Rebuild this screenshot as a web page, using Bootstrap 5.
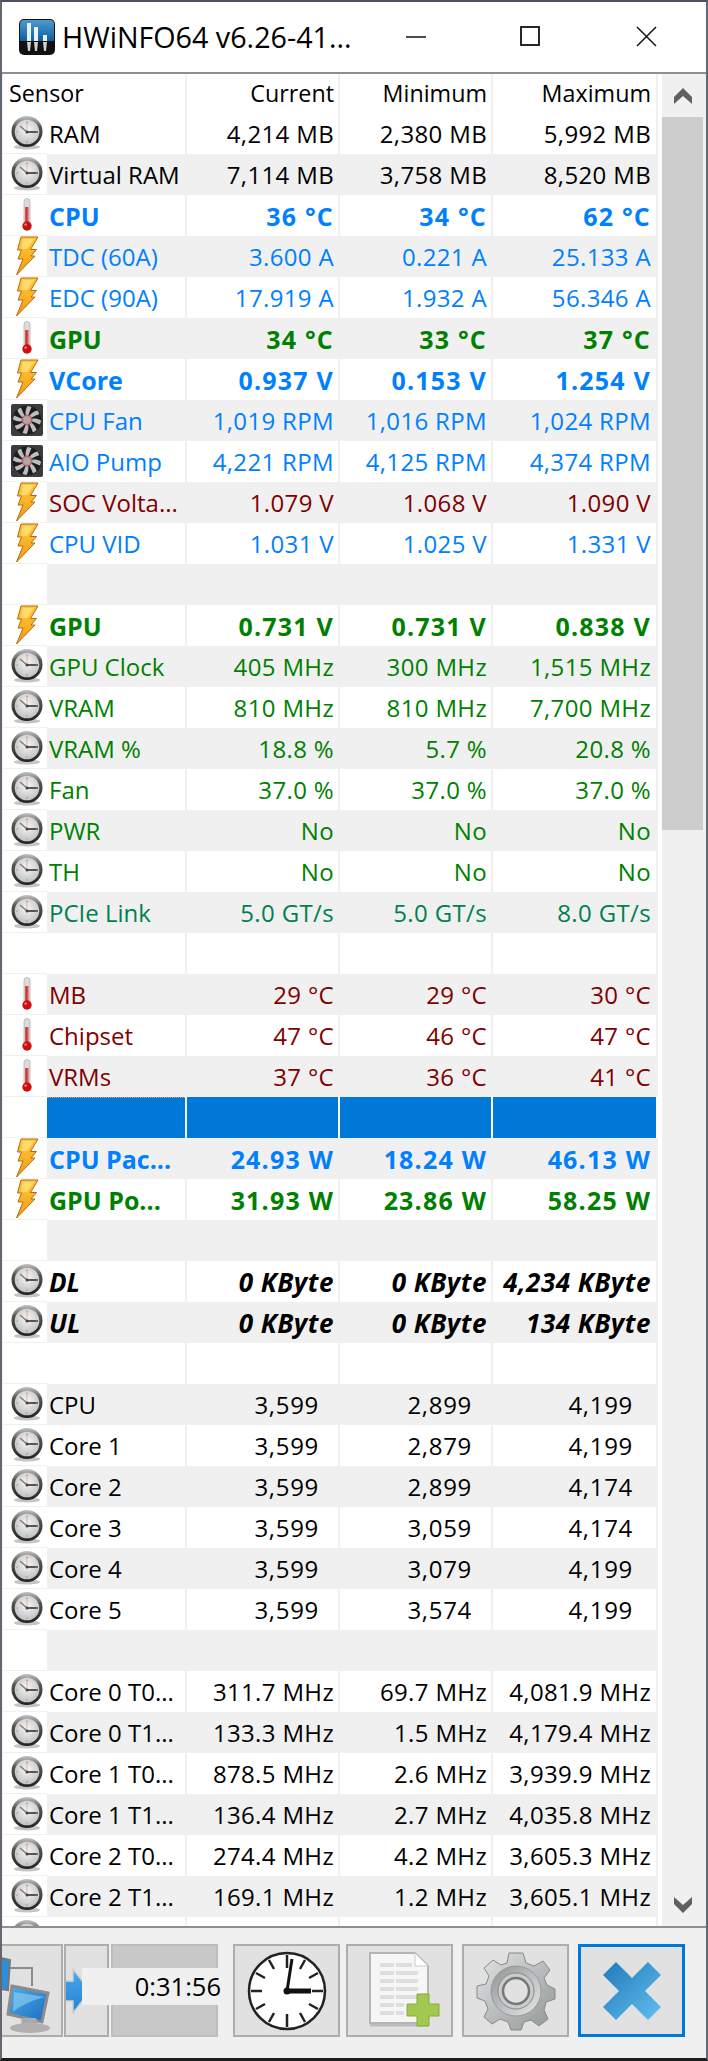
<!DOCTYPE html>
<html lang="en"><head><meta charset="utf-8"><title>HWiNFO64</title>
<link href="https://cdn.jsdelivr.net/npm/bootstrap@5.3.0/dist/css/bootstrap.min.css" rel="stylesheet">
<style>
html,body{margin:0;height:2061px;overflow:hidden;background:#f0f0f0}
body{font-family:"Open Sans","Noto Sans",sans-serif;font-size:24px;line-height:42px;color:#000}
.hw-win{width:708px;height:2061px;border-top:2px solid #4c5161;border-left:2px solid #63676f;border-right:2px solid #63676f;border-bottom:3px solid #1c1c1c;background:#f0f0f0}
.hw-title{height:72px;background:#fff;border-bottom:2px solid #8b8f98;font-size:28.700px;line-height:1;flex:none}
.hw-title .ti{width:36px;height:36px;margin-left:17px;margin-right:7px}
.hw-title .cap{white-space:nowrap}
.hw-cb{position:absolute;top:24px}
.hw-main{height:1852px;flex:none;background:#fff;margin-left:1px;overflow:hidden}
.hw-list{width:655px;flex:none;overflow:hidden}
.hw-head,.rw{display:grid;grid-template-columns:184px 153px 153px 165px;width:655px}
.hw-head{height:39px;line-height:39px;font-size:23.300px}
.hw-head>span{border-right:2px solid #f0f0f0;text-align:right;padding-right:4px;height:39px}
.hw-head>span:first-child{text-align:left;padding-left:6px;padding-right:0}
.hw-head>span:last-child{padding-right:5px}
.rw{height:41px;position:relative;white-space:nowrap}
.rw:nth-child(even) .nm,.rw:nth-child(even) .vl{background:#f0f0f0;border-right-color:#f0f0f0}
.nc{display:flex;overflow:hidden;border-right:2px solid #f0f0f0}
.ic{width:44px;flex:none;display:flex;align-items:center;justify-content:center;background:#fff;border-bottom:1px solid #f0f0f0;padding-left:4px}
.ic svg{width:34px;height:34px}
.ic svg.bolt{width:24px;height:40px}
.nm{flex:1;padding-left:2px;overflow:hidden}
.vl{text-align:right;padding-right:4px;border-right:2px solid #f0f0f0;overflow:hidden;letter-spacing:.35px}
.vl:last-child{padding-right:5px}
.rw.hz .vl{padding-right:19px;letter-spacing:.7px}
.rw.hz .vl:last-child{padding-right:23px}
.cb{color:#0080ff}.cg{color:#008000}.cr{color:#800000}.ct{color:#008050}
.st{font-weight:700;font-size:25px}.si{font-weight:700;font-style:italic;font-size:26px}
.st .vl{letter-spacing:1.200px}
.si .vl{letter-spacing:.5px}
.rw.sel .nm,.rw.sel .vl{background:#0078d7;border-right-color:#fff}
.rw.sel .nm{border-top:1px dotted #e89a4a}
.hw-sb{width:44px;flex:none;margin-left:4px;background:#f0f0f0;display:flex;flex-direction:column}
.hw-sb .ar{height:43px;width:41px;display:flex;align-items:center;justify-content:center;flex:none}
.hw-sb .th{height:713px;width:41px;background:#cdcdcd;flex:none}
.hw-foot{height:132px;border-top:2px solid #8b8f98;position:relative;background:#f0f0f0;padding-top:16px;flex:none}
.tb{height:93px;background:#e1e1e1;border:2px solid #adadad;display:flex;align-items:center;justify-content:center;flex:none;overflow:hidden}
.tb svg{display:block;flex:none}
.tb.dis{background:#c8c8c8;border-color:#bdbdbd}
.tb.act{border:3px solid #0078d7}
.hw-time{position:absolute;left:80px;top:40px;width:136px;height:37px;background:#f0f0f0;text-align:right;line-height:37px;font-size:25.500px;white-space:nowrap}
.hw-time span{display:inline-block;margin-right:-3px}
</style></head>
<body>
<svg width="0" height="0" class="position-absolute">
<defs>
<radialGradient id="gFace" cx=".5" cy=".4" r=".65"><stop offset="0" stop-color="#f6f6f6"/><stop offset="1" stop-color="#bdbdbd"/></radialGradient>
<linearGradient id="gRim" x1="0" y1="0" x2="0" y2="1"><stop offset="0" stop-color="#c4c4c4"/><stop offset=".35" stop-color="#555"/><stop offset="1" stop-color="#222"/></linearGradient>
<linearGradient id="gBolt" x1="0" y1="0" x2="0" y2="1"><stop offset="0" stop-color="#ffc93a"/><stop offset="1" stop-color="#f49a10"/></linearGradient>
<linearGradient id="gTh" x1="0" y1="0" x2="1" y2="0"><stop offset="0" stop-color="#c81818"/><stop offset="1" stop-color="#e87070"/></linearGradient>
<symbol id="k" viewBox="0 0 34 34"><ellipse cx="17" cy="31" rx="13" ry="2.500" fill="#c4c4c4"/><circle cx="17" cy="15.500" r="15.500" fill="url(#gRim)"/><circle cx="17" cy="16" r="12.300" fill="url(#gFace)"/><path d="M17 16 10 10" stroke="#777" stroke-width="1.300"/><path d="M17 16H28" stroke="#333" stroke-width="1.600"/><path d="M17 16V6" stroke="#e8a070" stroke-width=".8"/><path d="M17 5.500v1.500M17 25v1.500M6.500 16h1.500M26 16h1.500" stroke="#999" stroke-width="1"/><circle cx="17" cy="16" r="1.500" fill="#444"/></symbol>
<symbol id="t" viewBox="0 0 34 34"><rect x="14" y="0.500" width="6" height="27" rx="3" fill="#dcdcdc" stroke="#aaa" stroke-width=".7"/><rect x="15.300" y="9" width="3.400" height="19" fill="url(#gTh)"/><circle cx="17" cy="28" r="4.700" fill="#cc1010"/><circle cx="15.600" cy="26.600" r="1.200" fill="#f48a8a"/></symbol>
<symbol id="z" viewBox="0 0 24 40"><path d="M6 1H23L15.500 13.500H21.500L16 20H20L1.500 39 8 23H3L6.500 14H2.500Z" fill="url(#gBolt)" stroke="#b46a10" stroke-width="1"/><path d="M8 3H19L12 13H6Z" fill="#ffe07a" opacity=".8"/></symbol>
<symbol id="f" viewBox="0 0 34 34"><rect x="1" y="1" width="32" height="32" rx="2" fill="#3c3c3e"/><circle cx="17" cy="17" r="14.500" fill="#1d1d1f"/><g fill="#bdbdbf"><path id="bd" d="M17 17C15 12 15 7 17.500 3 19.500 3.200 20.500 3.600 21.500 4.200 19.500 8 18.500 12 17 17Z"/><use href="#bd" transform="rotate(45 17 17)"/><use href="#bd" transform="rotate(90 17 17)"/><use href="#bd" transform="rotate(135 17 17)"/><use href="#bd" transform="rotate(180 17 17)"/><use href="#bd" transform="rotate(225 17 17)"/><use href="#bd" transform="rotate(270 17 17)"/><use href="#bd" transform="rotate(315 17 17)"/></g><circle cx="17" cy="17" r="5" fill="#c9888e" stroke="#a44" stroke-width=".8"/><circle cx="17" cy="17" r="3.300" fill="#aaa"/></symbol>
<linearGradient id="gX" x1="0" y1="0" x2="1" y2="1"><stop offset="0" stop-color="#1f7ab8"/><stop offset="1" stop-color="#62bfef"/></linearGradient>
<linearGradient id="gGear" x1="0" y1="0" x2="1" y2="1"><stop offset="0" stop-color="#e4e6e6"/><stop offset="1" stop-color="#8f9494"/></linearGradient>
<linearGradient id="gRing" x1="0" y1="0" x2="1" y2="1"><stop offset="0" stop-color="#8f9393"/><stop offset="1" stop-color="#e6e8e8"/></linearGradient>
<linearGradient id="gScr" x1="0" y1="0" x2="1" y2="1"><stop offset="0" stop-color="#4fb0ea"/><stop offset="1" stop-color="#1a6cc0"/></linearGradient>
<linearGradient id="gArr" x1="0" y1="0" x2="0" y2="1"><stop offset="0" stop-color="#4aa8ec"/><stop offset="1" stop-color="#2283d4"/></linearGradient>
</defs>
</svg>
<div class="hw-win d-flex flex-column position-relative">
 <div class="hw-title d-flex align-items-center position-relative">
  <svg class="ti" viewBox="0 0 36 36"><defs><linearGradient id="gL" x1="0" y1="0" x2="0" y2="1"><stop offset="0" stop-color="#4e9ad0"/><stop offset="1" stop-color="#0d5f9c"/></linearGradient></defs><rect width="36" height="36" rx="5" fill="#111"/><path d="M1 5a4 4 0 0 1 4-4h26a4 4 0 0 1 4 4v17H1Z" fill="url(#gL)"/><path d="M8 4h4v18H8ZM15 8h4v14h-4ZM24 16h4v6h-4Z" fill="#e8f2f8"/><path d="M8 23h4l-1 9H9ZM15 23h4l-1 9h-2ZM24 23h4l-1 9h-2Z" fill="#d0d0d0"/></svg>
  <span class="cap">HWiNFO64 v6.26-41...</span>
  <svg class="hw-cb" style="left:403px" width="22" height="22" viewBox="0 0 22 22"><path d="M1 11H21" stroke="#111" stroke-width="1.500"/></svg>
  <svg class="hw-cb" style="left:518px" width="22" height="22" viewBox="0 0 22 22"><rect x="1" y="1" width="18" height="18" fill="none" stroke="#111" stroke-width="1.800"/></svg>
  <svg class="hw-cb" style="left:634px" width="22" height="22" viewBox="0 0 22 22"><path d="M1 1 20 20M20 1 1 20" stroke="#111" stroke-width="1.500"/></svg>
 </div>
 <div class="hw-main d-flex">
  <div class="hw-list">
   <div class="hw-head"><span>Sensor</span><span>Current</span><span>Minimum</span><span>Maximum</span></div>
   <div class="hw-rows">
<div class="rw"><div class="nc"><span class="ic"><svg><use href="#k"/></svg></span><span class="nm">RAM</span></div><span class="vl">4,214 MB</span><span class="vl">2,380 MB</span><span class="vl">5,992 MB</span></div>
<div class="rw"><div class="nc"><span class="ic"><svg><use href="#k"/></svg></span><span class="nm">Virtual RAM</span></div><span class="vl">7,114 MB</span><span class="vl">3,758 MB</span><span class="vl">8,520 MB</span></div>
<div class="rw cb st"><div class="nc"><span class="ic"><svg><use href="#t"/></svg></span><span class="nm">CPU</span></div><span class="vl">36 °C</span><span class="vl">34 °C</span><span class="vl">62 °C</span></div>
<div class="rw cb"><div class="nc"><span class="ic"><svg class="bolt"><use href="#z"/></svg></span><span class="nm">TDC (60A)</span></div><span class="vl">3.600 A</span><span class="vl">0.221 A</span><span class="vl">25.133 A</span></div>
<div class="rw cb"><div class="nc"><span class="ic"><svg class="bolt"><use href="#z"/></svg></span><span class="nm">EDC (90A)</span></div><span class="vl">17.919 A</span><span class="vl">1.932 A</span><span class="vl">56.346 A</span></div>
<div class="rw cg st"><div class="nc"><span class="ic"><svg><use href="#t"/></svg></span><span class="nm">GPU</span></div><span class="vl">34 °C</span><span class="vl">33 °C</span><span class="vl">37 °C</span></div>
<div class="rw cb st"><div class="nc"><span class="ic"><svg class="bolt"><use href="#z"/></svg></span><span class="nm">VCore</span></div><span class="vl">0.937 V</span><span class="vl">0.153 V</span><span class="vl">1.254 V</span></div>
<div class="rw cb"><div class="nc"><span class="ic"><svg><use href="#f"/></svg></span><span class="nm">CPU Fan</span></div><span class="vl">1,019 RPM</span><span class="vl">1,016 RPM</span><span class="vl">1,024 RPM</span></div>
<div class="rw cb"><div class="nc"><span class="ic"><svg><use href="#f"/></svg></span><span class="nm">AIO Pump</span></div><span class="vl">4,221 RPM</span><span class="vl">4,125 RPM</span><span class="vl">4,374 RPM</span></div>
<div class="rw cr"><div class="nc"><span class="ic"><svg class="bolt"><use href="#z"/></svg></span><span class="nm">SOC Volta...</span></div><span class="vl">1.079 V</span><span class="vl">1.068 V</span><span class="vl">1.090 V</span></div>
<div class="rw cb"><div class="nc"><span class="ic"><svg class="bolt"><use href="#z"/></svg></span><span class="nm">CPU VID</span></div><span class="vl">1.031 V</span><span class="vl">1.025 V</span><span class="vl">1.331 V</span></div>
<div class="rw"><div class="nc"><span class="ic"></span><span class="nm"></span></div><span class="vl"></span><span class="vl"></span><span class="vl"></span></div>
<div class="rw cg st"><div class="nc"><span class="ic"><svg class="bolt"><use href="#z"/></svg></span><span class="nm">GPU</span></div><span class="vl">0.731 V</span><span class="vl">0.731 V</span><span class="vl">0.838 V</span></div>
<div class="rw cg"><div class="nc"><span class="ic"><svg><use href="#k"/></svg></span><span class="nm">GPU Clock</span></div><span class="vl">405 MHz</span><span class="vl">300 MHz</span><span class="vl">1,515 MHz</span></div>
<div class="rw cg"><div class="nc"><span class="ic"><svg><use href="#k"/></svg></span><span class="nm">VRAM</span></div><span class="vl">810 MHz</span><span class="vl">810 MHz</span><span class="vl">7,700 MHz</span></div>
<div class="rw cg"><div class="nc"><span class="ic"><svg><use href="#k"/></svg></span><span class="nm">VRAM %</span></div><span class="vl">18.8 %</span><span class="vl">5.7 %</span><span class="vl">20.8 %</span></div>
<div class="rw cg"><div class="nc"><span class="ic"><svg><use href="#k"/></svg></span><span class="nm">Fan</span></div><span class="vl">37.0 %</span><span class="vl">37.0 %</span><span class="vl">37.0 %</span></div>
<div class="rw cg"><div class="nc"><span class="ic"><svg><use href="#k"/></svg></span><span class="nm">PWR</span></div><span class="vl">No</span><span class="vl">No</span><span class="vl">No</span></div>
<div class="rw cg"><div class="nc"><span class="ic"><svg><use href="#k"/></svg></span><span class="nm">TH</span></div><span class="vl">No</span><span class="vl">No</span><span class="vl">No</span></div>
<div class="rw ct"><div class="nc"><span class="ic"><svg><use href="#k"/></svg></span><span class="nm">PCIe Link</span></div><span class="vl">5.0 GT/s</span><span class="vl">5.0 GT/s</span><span class="vl">8.0 GT/s</span></div>
<div class="rw"><div class="nc"><span class="ic"></span><span class="nm"></span></div><span class="vl"></span><span class="vl"></span><span class="vl"></span></div>
<div class="rw cr"><div class="nc"><span class="ic"><svg><use href="#t"/></svg></span><span class="nm">MB</span></div><span class="vl">29 °C</span><span class="vl">29 °C</span><span class="vl">30 °C</span></div>
<div class="rw cr"><div class="nc"><span class="ic"><svg><use href="#t"/></svg></span><span class="nm">Chipset</span></div><span class="vl">47 °C</span><span class="vl">46 °C</span><span class="vl">47 °C</span></div>
<div class="rw cr"><div class="nc"><span class="ic"><svg><use href="#t"/></svg></span><span class="nm">VRMs</span></div><span class="vl">37 °C</span><span class="vl">36 °C</span><span class="vl">41 °C</span></div>
<div class="rw sel"><div class="nc"><span class="ic"></span><span class="nm"></span></div><span class="vl"></span><span class="vl"></span><span class="vl"></span></div>
<div class="rw cb st"><div class="nc"><span class="ic"><svg class="bolt"><use href="#z"/></svg></span><span class="nm">CPU Pac...</span></div><span class="vl">24.93 W</span><span class="vl">18.24 W</span><span class="vl">46.13 W</span></div>
<div class="rw cg st"><div class="nc"><span class="ic"><svg class="bolt"><use href="#z"/></svg></span><span class="nm">GPU Po...</span></div><span class="vl">31.93 W</span><span class="vl">23.86 W</span><span class="vl">58.25 W</span></div>
<div class="rw"><div class="nc"><span class="ic"></span><span class="nm"></span></div><span class="vl"></span><span class="vl"></span><span class="vl"></span></div>
<div class="rw si"><div class="nc"><span class="ic"><svg><use href="#k"/></svg></span><span class="nm">DL</span></div><span class="vl">0 KByte</span><span class="vl">0 KByte</span><span class="vl">4,234 KByte</span></div>
<div class="rw si"><div class="nc"><span class="ic"><svg><use href="#k"/></svg></span><span class="nm">UL</span></div><span class="vl">0 KByte</span><span class="vl">0 KByte</span><span class="vl">134 KByte</span></div>
<div class="rw"><div class="nc"><span class="ic"></span><span class="nm"></span></div><span class="vl"></span><span class="vl"></span><span class="vl"></span></div>
<div class="rw hz"><div class="nc"><span class="ic"><svg><use href="#k"/></svg></span><span class="nm">CPU</span></div><span class="vl">3,599</span><span class="vl">2,899</span><span class="vl">4,199</span></div>
<div class="rw hz"><div class="nc"><span class="ic"><svg><use href="#k"/></svg></span><span class="nm">Core 1</span></div><span class="vl">3,599</span><span class="vl">2,879</span><span class="vl">4,199</span></div>
<div class="rw hz"><div class="nc"><span class="ic"><svg><use href="#k"/></svg></span><span class="nm">Core 2</span></div><span class="vl">3,599</span><span class="vl">2,899</span><span class="vl">4,174</span></div>
<div class="rw hz"><div class="nc"><span class="ic"><svg><use href="#k"/></svg></span><span class="nm">Core 3</span></div><span class="vl">3,599</span><span class="vl">3,059</span><span class="vl">4,174</span></div>
<div class="rw hz"><div class="nc"><span class="ic"><svg><use href="#k"/></svg></span><span class="nm">Core 4</span></div><span class="vl">3,599</span><span class="vl">3,079</span><span class="vl">4,199</span></div>
<div class="rw hz"><div class="nc"><span class="ic"><svg><use href="#k"/></svg></span><span class="nm">Core 5</span></div><span class="vl">3,599</span><span class="vl">3,574</span><span class="vl">4,199</span></div>
<div class="rw"><div class="nc"><span class="ic"></span><span class="nm"></span></div><span class="vl"></span><span class="vl"></span><span class="vl"></span></div>
<div class="rw"><div class="nc"><span class="ic"><svg><use href="#k"/></svg></span><span class="nm">Core 0 T0...</span></div><span class="vl">311.7 MHz</span><span class="vl">69.7 MHz</span><span class="vl">4,081.9 MHz</span></div>
<div class="rw"><div class="nc"><span class="ic"><svg><use href="#k"/></svg></span><span class="nm">Core 0 T1...</span></div><span class="vl">133.3 MHz</span><span class="vl">1.5 MHz</span><span class="vl">4,179.4 MHz</span></div>
<div class="rw"><div class="nc"><span class="ic"><svg><use href="#k"/></svg></span><span class="nm">Core 1 T0...</span></div><span class="vl">878.5 MHz</span><span class="vl">2.6 MHz</span><span class="vl">3,939.9 MHz</span></div>
<div class="rw"><div class="nc"><span class="ic"><svg><use href="#k"/></svg></span><span class="nm">Core 1 T1...</span></div><span class="vl">136.4 MHz</span><span class="vl">2.7 MHz</span><span class="vl">4,035.8 MHz</span></div>
<div class="rw"><div class="nc"><span class="ic"><svg><use href="#k"/></svg></span><span class="nm">Core 2 T0...</span></div><span class="vl">274.4 MHz</span><span class="vl">4.2 MHz</span><span class="vl">3,605.3 MHz</span></div>
<div class="rw"><div class="nc"><span class="ic"><svg><use href="#k"/></svg></span><span class="nm">Core 2 T1...</span></div><span class="vl">169.1 MHz</span><span class="vl">1.2 MHz</span><span class="vl">3,605.1 MHz</span></div>
<div class="rw"><div class="nc"><span class="ic"><svg><use href="#k"/></svg></span><span class="nm"></span></div><span class="vl"></span><span class="vl"></span><span class="vl"></span></div>
   </div>
  </div>
  <div class="hw-sb">
   <div class="ar"><svg width="18" height="16" viewBox="0 0 18 16"><path d="M0 9 9 0 18 9V16L9 8 0 16Z" fill="#606060"/></svg></div>
   <div class="th"></div>
   <div class="ar mt-auto"><svg width="18" height="16" viewBox="0 0 18 16"><path d="M0 0 9 8 18 0V7L9 16 0 7Z" fill="#606060"/></svg></div>
  </div>
 </div>
 <div class="hw-foot d-flex">
  <div class="tb" style="width:61px;border-left:0">
   <svg width="59" height="89" viewBox="0 0 59 89"><path d="M-6 11 8 14 6 44-8 42Z" fill="#2d8fd8" stroke="#777" stroke-width="2"/><path d="M8 22H30V40" fill="none" stroke="#8a8a8a" stroke-width="2"/><path d="M10 40 46 47 40 76 6 68Z" fill="url(#gScr)" stroke="#8c8c8c" stroke-width="3"/><path d="M12 46 43 51C30 54 18 60 11 66Z" fill="#8fd0f4" opacity=".6"/><path d="M19 72H34L36 80H20Z" fill="#aaa"/><ellipse cx="28" cy="82" rx="20" ry="5" fill="#b0b0b0"/></svg>
  </div>
  <div class="tb" style="width:45px;margin-left:1px">
   <svg width="41" height="46" viewBox="0 0 41 46" style="margin-left:-4px"><path d="M0 13H9V1L26 23 9 45V33H0Z" fill="url(#gArr)" stroke="#cfcfcf" stroke-width="1.500"/></svg>
  </div>
  <div class="tb dis" style="width:107px;margin-left:2px"></div>
  <div class="tb" style="width:107px;margin-left:15px">
   <svg width="80" height="80" viewBox="0 0 80 80"><circle cx="40" cy="40" r="38" fill="#fff" stroke="#222" stroke-width="2.500"/><g stroke="#222" stroke-width="2.500"><path d="M40 4V17M40 63V76M4 40H15M65 40H76M22 9 27 18M58 9 53 18M9 22 18 27M71 22 62 27M9 58 18 53M71 58 62 53M22 71 27 62M58 71 53 62"/></g><path d="M40 40 45 8" stroke="#111" stroke-width="3"/><path d="M40 40H64" stroke="#111" stroke-width="5"/><circle cx="40" cy="40" r="3.500" fill="#111"/></svg>
  </div>
  <div class="tb" style="width:107px;margin-left:6px">
   <svg class="ms-2" width="72" height="80" viewBox="0 0 72 80"><path d="M2 74H60" stroke="#bdbdbd" stroke-width="3"/><path d="M2 2H47L60 15V72H2Z" fill="#f6f6f6" stroke="#b5b5b5" stroke-width="2"/><path d="M47 2V15H60Z" fill="#fff" stroke="#ccc"/><path d="M12 14H44M12 22H50M12 30H50M12 38H50M12 46H50M12 54H36M12 62H36" stroke="#dedede" stroke-width="4"/><path d="M27 10V66" stroke="#f6f6f6" stroke-width="2"/><path d="M49 43H61V53H71V65H61V75H49V65H39V53H49Z" fill="#a2c94f" stroke="#84ad38"/></svg>
  </div>
  <div class="tb" style="width:107px;margin-left:9px">
   <svg width="80" height="80" viewBox="0 0 80 80"><path d="M33 2H47L50 12 58 15 67 10 74 19 68 27 71 34 79 38V48L70 51 68 59 72 68 63 75 55 69 48 71 45 79H35L32 71 24 68 16 73 8 66 12 58 9 50 1 47V35L10 33 13 25 8 17 17 9 25 14 31 12Z" fill="url(#gGear)" stroke="#888"/><circle cx="40" cy="40" r="25" fill="url(#gRing)" stroke="#9a9a9a"/><circle cx="40" cy="40" r="18" fill="#c9cccc" stroke="#8a8a8a"/><circle cx="40" cy="40" r="13" fill="#e1e1e1" stroke="#777" stroke-width="2.500"/></svg>
  </div>
  <div class="tb act" style="width:107px;margin-left:9px">
   <svg width="60" height="60" viewBox="0 0 60 60"><path d="M14 1 30 17 46 1 59 14 43 30 59 46 46 59 30 43 14 59 1 46 17 30 1 14Z" fill="url(#gX)"/></svg>
  </div>
  <div class="hw-time"><span>0:31:56</span></div>
 </div>
</div>
</body></html>
